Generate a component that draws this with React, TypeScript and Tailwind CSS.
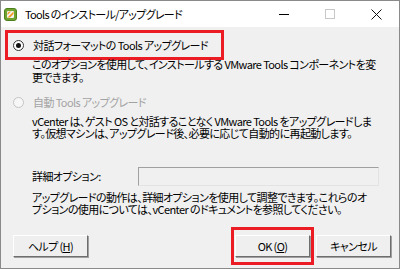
import type { ReactNode } from "react"

function Radio({ checked, disabled }: { checked?: boolean; disabled?: boolean }) {
  return (
    <span
      className={`flex h-[11px] w-[11px] shrink-0 items-center justify-center rounded-full border ${
        disabled ? "border-[#c4c4c4] bg-[#f7f7f7]" : "border-[#333333] bg-white"
      }`}
    >
      {checked && <span className="h-[5px] w-[5px] rounded-full bg-[#111111]" />}
    </span>
  )
}

function Line({ children }: { children: ReactNode }) {
  return <div className="whitespace-nowrap">{children}</div>
}

function Btn({ children }: { children: ReactNode }) {
  return (
    <button
      type="button"
      className="flex h-[22px] w-[75px] items-center justify-center whitespace-nowrap border border-t-white border-l-white border-r-[#6e6e6e] border-b-[#6e6e6e] bg-[#efefef] text-black shadow-[1px_1px_0_#a0a0a0]"
    >
      {children}
    </button>
  )
}

function AppIcon() {
  return (
    <svg width="13" height="13" viewBox="0 0 13 13">
      <rect x="0.5" y="0.5" width="12" height="12" rx="2.5" fill="#6fa52f" stroke="#4d7f1c" />
      <rect x="3" y="3" width="7" height="7" rx="1" fill="#f3f3f3" />
      <path d="M3.5 9.5 L9.5 3.5 L9.5 6 L6 9.5 Z" fill="#f39a1e" />
      <path d="M3.5 7 L7 3.5 L5 3.5 L3.5 5 Z" fill="#f39a1e" />
    </svg>
  )
}

export default function App() {
  return (
    <div className="flex h-[269px] w-[400px] flex-col overflow-hidden border border-[#8a8a8a] bg-[#f0f0f0] font-['Noto_Sans_CJK_JP',sans-serif] text-[11px] tracking-[-0.6px] text-black [font-feature-settings:'palt']">
      {/* title bar */}
      <div className="flex h-[26px] shrink-0 items-center bg-white">
        <div className="ml-[3px] flex w-[13px] items-center">
          <AppIcon />
        </div>
        <span className="ml-[8px] whitespace-nowrap leading-none tracking-[-0.7px]">Tools のインストール/アップグレード</span>
        <div className="ml-auto flex h-full items-center">
          <div className="flex h-full w-[46px] items-center justify-center">
            <span className="block h-px w-[10px] bg-black" />
          </div>
          <div className="flex h-full w-[46px] items-center justify-center">
            <span className="block h-[10px] w-[10px] border border-[#c8c8c8]" />
          </div>
          <div className="flex h-full w-[46px] items-center justify-center">
            <svg width="11" height="11" viewBox="0 0 11 11">
              <path d="M0.5 0.5 L10.5 10.5 M10.5 0.5 L0.5 10.5" stroke="#111" strokeWidth="1" />
            </svg>
          </div>
        </div>
      </div>

      {/* body */}
      <div className="flex flex-1 flex-col pl-[4px]">
        <div className="mt-[3px] flex h-[30px] w-[219px] items-center border-[3px] border-[#ec1c24] pl-[5px]">
          <Radio checked />
          <span className="ml-[9px] whitespace-nowrap">対話フォーマットの Tools アップグレード</span>
        </div>

        <div className="-mt-[2px] pl-[27px] leading-[13px]">
          <Line>このオプションを使用して、インストールする VMware Tools コンポーネントを変</Line>
          <Line>更できます。</Line>
        </div>

        <div className="mt-[8px] flex h-[21px] items-center pl-[8px] text-[#a3a3a3]">
          <Radio disabled />
          <span className="ml-[9px] whitespace-nowrap">自動 Tools アップグレード</span>
        </div>

        <div className="mt-[2px] pl-[27px] leading-[12px]">
          <Line>vCenter は、ゲスト OS と対話することなく VMware Tools をアップグレードしま</Line>
          <Line>す。仮想マシンは、アップグレード後、必要に応じて自動的に再起動します。</Line>
        </div>

        <div className="mt-[28px] flex h-[19px] items-center pl-[27px]">
          <span className="w-[106px] whitespace-nowrap">詳細オプション:</span>
          <div className="h-[19px] w-[241px] border border-t-[#a0a0a0] border-l-[#a0a0a0] border-r-[#e3e3e3] border-b-[#e3e3e3] bg-[#f0f0f0]" />
        </div>

        <div className="mt-[5px] pl-[27px] leading-[12px]">
          <Line>アップグレードの動作は、詳細オプションを使用して調整できます。これらのオ</Line>
          <Line>プションの使用については、vCenter のドキュメントを参照してください。</Line>
        </div>

        <div className="mt-[12px] flex items-center">
          <div className="ml-[8px]">
            <Btn>
              ヘルプ (<span className="underline">H</span>)
            </Btn>
          </div>
          <div className="ml-auto flex h-[38px] w-[83px] items-center justify-center border-[3px] border-[#ec1c24]">
            <Btn>
              OK (<span className="underline">O</span>)
            </Btn>
          </div>
          <div className="ml-[2px] mr-[8px]">
            <Btn>キャンセル</Btn>
          </div>
        </div>
      </div>
    </div>
  )
}
